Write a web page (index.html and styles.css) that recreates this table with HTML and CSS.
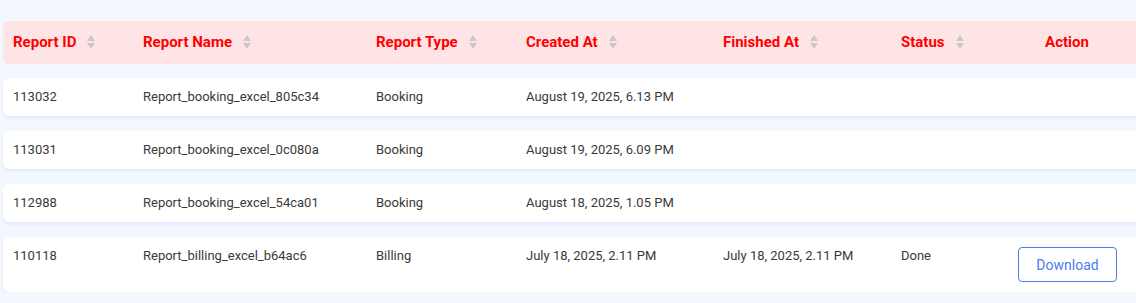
FILE: index.html
```html
<!DOCTYPE html>
<html lang="en">
<head>
<meta charset="utf-8">
<title>Reports</title>
<link rel="stylesheet" href="styles.css">
</head>
<body>
<div class="page">
  <div class="table">
    <div class="row head">
      <div class="cell"><span>Report ID</span><i class="sort"></i></div>
      <div class="cell"><span>Report Name</span><i class="sort"></i></div>
      <div class="cell"><span>Report Type</span><i class="sort"></i></div>
      <div class="cell"><span>Created At</span><i class="sort"></i></div>
      <div class="cell"><span>Finished At</span><i class="sort"></i></div>
      <div class="cell"><span>Status</span><i class="sort"></i></div>
      <div class="cell action"><span>Action</span></div>
    </div>
    <div class="row">
      <div class="cell">113032</div>
      <div class="cell">Report_booking_excel_805c34</div>
      <div class="cell">Booking</div>
      <div class="cell">August 19, 2025, 6.13 PM</div>
      <div class="cell"></div>
      <div class="cell"></div>
      <div class="cell action"></div>
    </div>
    <div class="row">
      <div class="cell">113031</div>
      <div class="cell">Report_booking_excel_0c080a</div>
      <div class="cell">Booking</div>
      <div class="cell">August 19, 2025, 6.09 PM</div>
      <div class="cell"></div>
      <div class="cell"></div>
      <div class="cell action"></div>
    </div>
    <div class="row">
      <div class="cell">112988</div>
      <div class="cell">Report_booking_excel_54ca01</div>
      <div class="cell">Booking</div>
      <div class="cell">August 18, 2025, 1.05 PM</div>
      <div class="cell"></div>
      <div class="cell"></div>
      <div class="cell action"></div>
    </div>
    <div class="row">
      <div class="cell">110118</div>
      <div class="cell">Report_billing_excel_b64ac6</div>
      <div class="cell">Billing</div>
      <div class="cell">July 18, 2025, 2.11 PM</div>
      <div class="cell">July 18, 2025, 2.11 PM</div>
      <div class="cell">Done</div>
      <div class="cell action"><button class="btn">Download</button></div>
    </div>
  </div>
</div>
</body>
</html>
```
FILE: styles.css
```css
* { box-sizing: border-box; }
html, body {
  margin: 0;
  padding: 0;
  background: #f3f7fe;
  overflow: hidden;
}
body {
  font-family: Roboto, "Noto Sans", Arial, sans-serif;
  color: #3a3a3a;
  font-size: 13px;
}
.page {
  padding: 21px 0 0 3px;
  width: 1136px;
  overflow: hidden;
}
.table {
  width: 1150px;
  display: flex;
  flex-direction: column;
  gap: 15px;
}
.row {
  display: grid;
  grid-template-columns: 130px 233px 150px 197px 178px 117px 145px;
  background: #ffffff;
  border-radius: 6px;
  box-shadow: 0 2px 3px rgba(70, 120, 210, 0.10);
}
.row.head {
  background: #ffe4e5;
  box-shadow: none;
  margin-bottom: -1px;
}
.cell {
  padding: 10px 10px;
  line-height: 18px;
  min-height: 38px;
  white-space: nowrap;
}
.head .cell {
  display: flex;
  align-items: center;
  height: 43px;
  padding: 0 10px 2px;
  color: #ff0000;
  font-weight: 700;
  font-size: 15px;
}
.cell.action {
  padding-right: 37px;
  padding-left: 10px;
  text-align: center;
}
.head .cell.action {
  justify-content: center;
}
.sort {
  display: inline-flex;
  flex-direction: column;
  gap: 2px;
  margin-left: 11px;
  margin-top: 1px;
}
.sort::before,
.sort::after {
  content: "";
  width: 0;
  height: 0;
  border-left: 4px solid transparent;
  border-right: 4px solid transparent;
}
.sort::before {
  border-bottom: 6px solid #c9c9c9;
}
.sort::after {
  border-top: 6px solid #c9c9c9;
}
.btn {
  width: 99px;
  height: 35px;
  border: 1px solid #4a7cf0;
  border-radius: 4px;
  background: #ffffff;
  color: #4a7cf0;
  font-family: inherit;
  font-size: 14px;
  cursor: pointer;
}
```
